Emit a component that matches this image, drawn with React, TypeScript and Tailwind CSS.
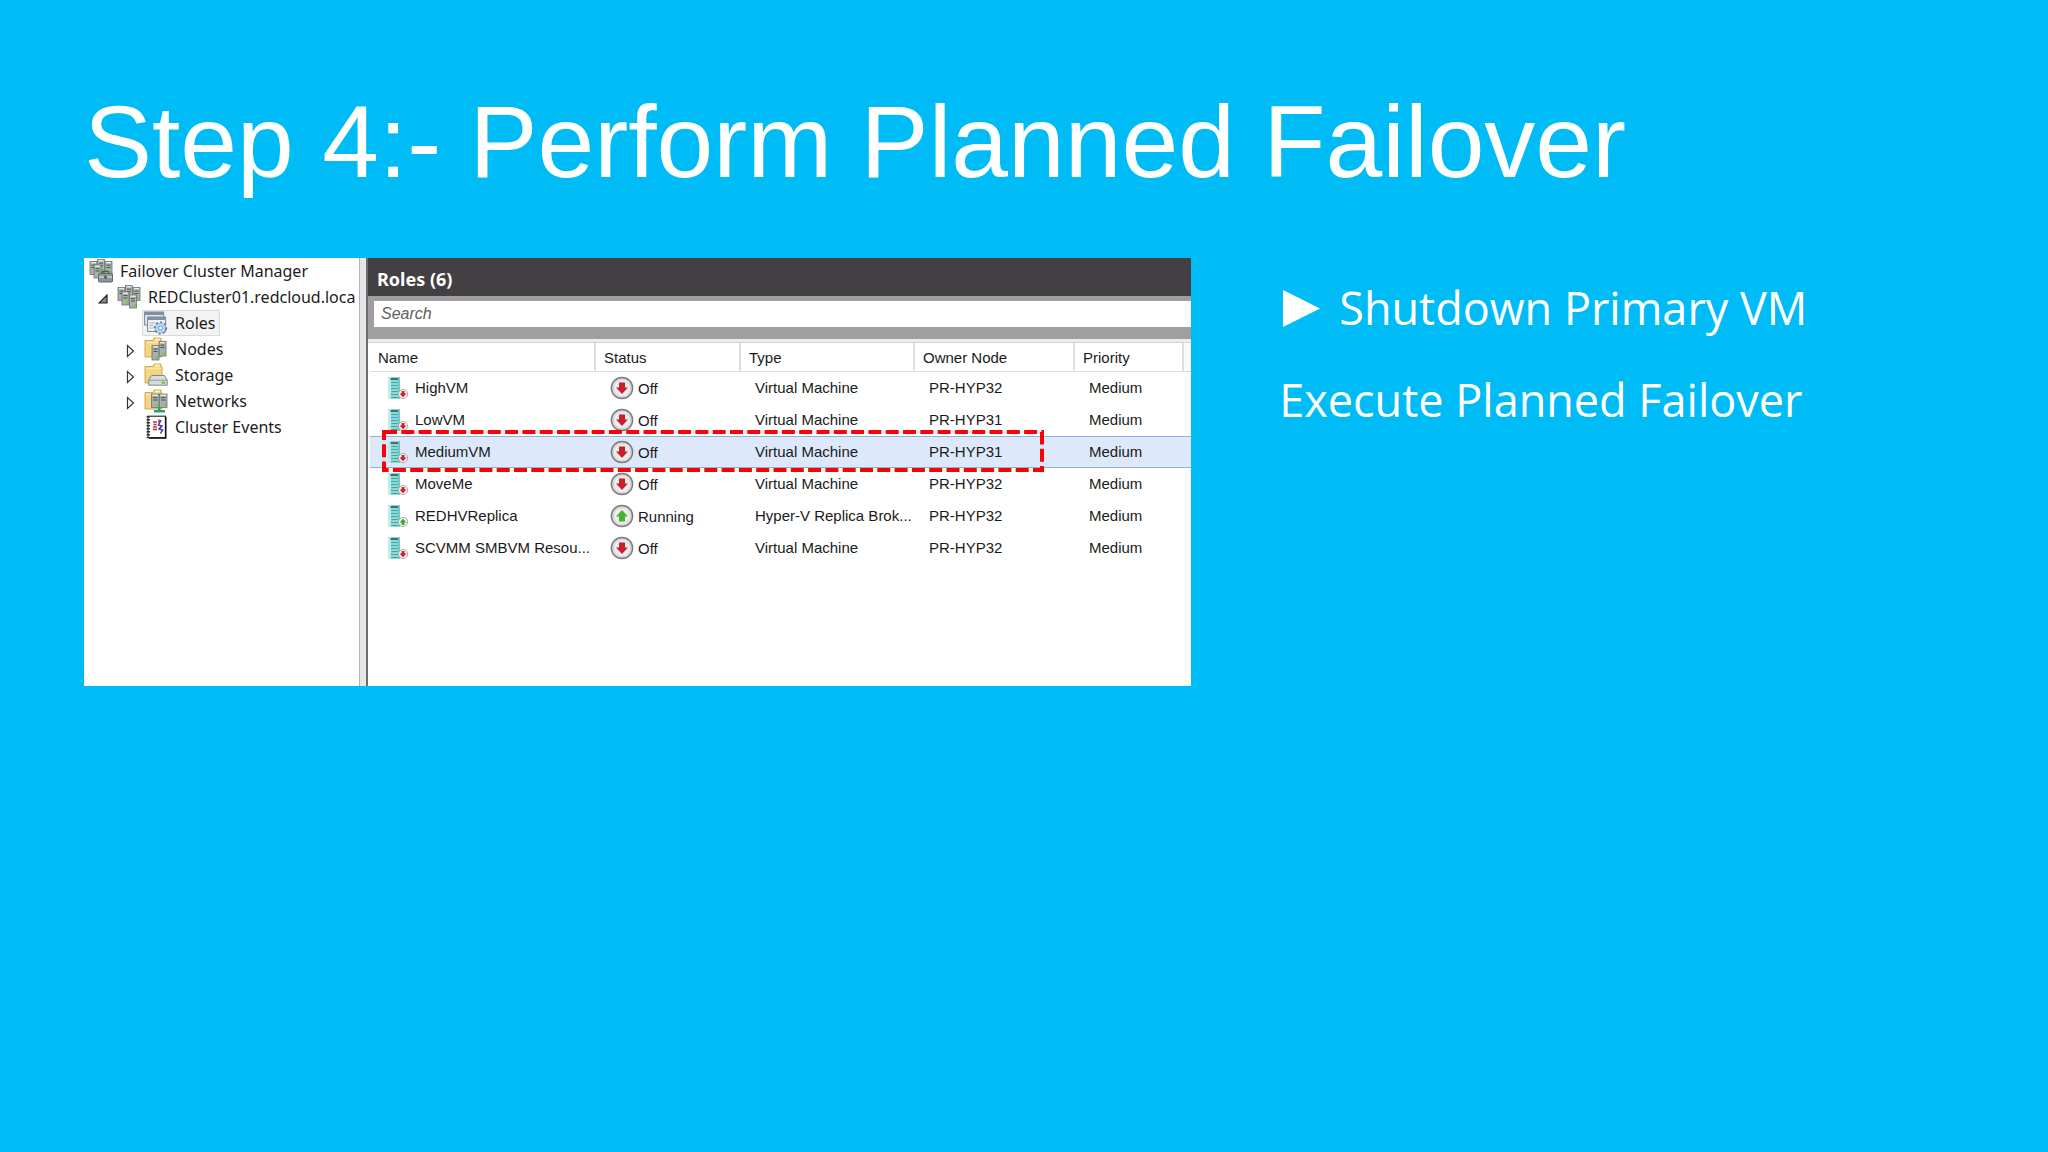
import clsx from "clsx";

type RoleState = "Off" | "Running";
type TreeIconName = "manager" | "cluster" | "roles" | "nodes" | "storage" | "networks" | "events";

interface Role {
  name: string;
  state: RoleState;
  type: string;
  owner: string;
  priority: string;
  selected?: boolean;
}

interface TreeNode {
  label: string;
  icon: TreeIconName;
  expandable?: boolean;
  selected?: boolean;
}

const ROLES: Role[] = [
  { name: "HighVM", state: "Off", type: "Virtual Machine", owner: "PR-HYP32", priority: "Medium" },
  { name: "LowVM", state: "Off", type: "Virtual Machine", owner: "PR-HYP31", priority: "Medium" },
  { name: "MediumVM", state: "Off", type: "Virtual Machine", owner: "PR-HYP31", priority: "Medium", selected: true },
  { name: "MoveMe", state: "Off", type: "Virtual Machine", owner: "PR-HYP32", priority: "Medium" },
  { name: "REDHVReplica", state: "Running", type: "Hyper-V Replica Brok...", owner: "PR-HYP32", priority: "Medium" },
  { name: "SCVMM SMBVM Resou...", state: "Off", type: "Virtual Machine", owner: "PR-HYP32", priority: "Medium" },
];

const CHILDREN: TreeNode[] = [
  { label: "Roles", icon: "roles", selected: true },
  { label: "Nodes", icon: "nodes", expandable: true },
  { label: "Storage", icon: "storage", expandable: true },
  { label: "Networks", icon: "networks", expandable: true },
  { label: "Cluster Events", icon: "events" },
];

const COLUMNS = ["Name", "Status", "Type", "Owner Node", "Priority"];

function Tower({ x, y, w = 7, h = 13 }: { x: number; y: number; w?: number; h?: number }) {
  return (
    <g>
      <rect x={x} y={y} width={w} height={h} fill="#a9b0ae" stroke="#6d7673" strokeWidth="0.8" />
      <path d={`M${x + 1} ${y + 1.2}h${w - 2}`} stroke="#eef2f1" strokeWidth="1.2" />
      <path d={`M${x + 1.5} ${y + 3.6}h${w - 3}M${x + 1.5} ${y + 6}h${w - 3}`} stroke="#4b5553" strokeWidth="1" />
      <rect x={x + w - 3} y={y + h - 3.6} width="2" height="2.2" fill="#5fd32a" />
    </g>
  );
}

function Folder() {
  return (
    <g>
      <path d="M1 3.5h8l1-2.5h7v3h1v16H1z" fill="#f5d67c" stroke="#c9a24a" strokeWidth="0.9" />
      <path d="M11 2.5h5" stroke="#fff3c4" strokeWidth="1.6" />
      <path d="M2 5.5h15" stroke="#fbe8ac" strokeWidth="1.4" />
    </g>
  );
}

function TreeIcon({ name }: { name: TreeIconName }) {
  return (
    <svg viewBox="0 0 24 24" className="size-6 shrink-0" aria-hidden="true">
      {(name === "manager" || name === "cluster") && (
        <>
          <Tower x={8.5} y={0.6} />
          <Tower x={1} y={2.5} />
          <Tower x={16} y={2.5} />
        </>
      )}
      {name === "cluster" && (
        <>
          <Tower x={5} y={7} />
          <Tower x={12.5} y={10} />
        </>
      )}
      {name === "manager" && (
        <>
          <Tower x={5} y={6} />
          <path d="M13.5 14.5v-2.2h6v2.2" fill="none" stroke="#4f565a" strokeWidth="1.3" />
          <rect x="9.5" y="14.5" width="14" height="8.5" rx="1" fill="#8d969b" stroke="#575f64" strokeWidth="0.9" />
          <path d="M10 18h13" stroke="#d5dadd" strokeWidth="1.3" />
          <rect x="15.2" y="16.8" width="2.6" height="2.8" fill="#4f565a" />
        </>
      )}
      {name === "roles" && (
        <>
          <rect x="0.6" y="1" width="19" height="13" fill="#dfe5ec" stroke="#7d8896" strokeWidth="1" />
          <rect x="0.6" y="1" width="19" height="3" fill="#8290a3" />
          <rect x="3.6" y="6" width="18" height="14.5" fill="#eef2f7" stroke="#7d8896" strokeWidth="1" />
          <rect x="3.6" y="6" width="18" height="3" fill="#8290a3" />
          <path d="M5.5 12h6M5.5 14.5h4M5.5 17h4" stroke="#aab4c1" strokeWidth="1.2" />
          <circle cx="16.500" cy="17" r="5.6" fill="#9fc0dd" stroke="#5b7c9c" strokeWidth="2" strokeDasharray="2.1 2.1" />
          <circle cx="16.500" cy="17" r="4.8" fill="#b9d6ee" />
          <circle cx="16.500" cy="17" r="2" fill="#f4f9fd" stroke="#5f87ad" strokeWidth="0.8" />
        </>
      )}
      {name === "nodes" && (
        <>
          <Folder />
          <Tower x={15} y={4.5} h={14.5} />
          <Tower x={8} y={8.5} h={14.5} />
        </>
      )}
      {name === "storage" && (
        <>
          <Folder />
          <path d="M7.500 12.500h13l2.700 4.500v5.200H4.800V17z" fill="#d9dcde" stroke="#777d81" strokeWidth="0.9" />
          <path d="M5 17.2h18" stroke="#8c9296" strokeWidth="0.9" />
          <rect x="17.5" y="18.6" width="3.6" height="2" fill="#4ccb22" />
        </>
      )}
      {name === "networks" && (
        <>
          <Folder />
          <Tower x={7.5} y={5} w={7.5} h={13.5} />
          <Tower x={15.5} y={5} w={7.5} h={13.5} />
          <path d="M15.3 18.5v3M10 22.3h11" stroke="#22a06e" strokeWidth="2.4" />
        </>
      )}
      {name === "events" && (
        <>
          <rect x="4" y="1.2" width="17.5" height="21.6" fill="#fdfdfd" stroke="#222" strokeWidth="1.1" />
          <path d="M21.7 2v21H5" fill="none" stroke="#111" strokeWidth="1.6" />
          <path d="M4.3 1v22" stroke="#333" strokeWidth="3.4" strokeDasharray="1.5 1.5" />
          <path d="M9 7h4M9.5 9.5h3M9 12h4M9 14.5h4M15 4.5v3" stroke="#c62a3a" strokeWidth="1.6" />
          <path d="M17 5l-2.5 5 3.5 1-3 3 3.5 1-2 3.5" fill="none" stroke="#4436a8" strokeWidth="1.5" />
        </>
      )}
    </svg>
  );
}

function ServerIcon({ state }: { state: RoleState }) {
  return (
    <svg viewBox="0 0 20 24" className="h-6 w-5 shrink-0" aria-hidden="true">
      <rect x="0.5" y="1" width="11" height="22" fill="#8ad9d7" />
      <rect x="0.5" y="1" width="2.5" height="22" fill="#bdebe9" />
      <path d="M2.5 3h7.5" stroke="#1f5558" strokeWidth="1.5" />
      <path d="M3 6.5h7M3 9.5h7M3 12.5h7M3 15.5h7M3 18.5h7M3 21.5h7" stroke="#4aa5a6" strokeWidth="1" />
      <path d="M11.2 1v22" stroke="#55aeb0" strokeWidth="1" />
      <circle cx="15" cy="18" r="4.6" fill="#f4f0f0" stroke="#a8a2a2" strokeWidth="0.9" />
      {state === "Off"
        ? <path d="M13.6 15h2.8v2.6h2L15 21.2l-3.4-3.6h2z" fill="#c8202b" />
        : <path d="M13.6 21h2.8v-2.6h2L15 14.8l-3.4 3.6h2z" fill="#36ad27" />}
    </svg>
  );
}

function StatusIcon({ state }: { state: RoleState }) {
  return (
    <svg viewBox="0 0 24 24" className="size-6 shrink-0" aria-hidden="true">
      <circle cx="12" cy="12" r="10.6" fill="#e2e0e0" stroke="#7c7a7a" strokeWidth="1.5" />
      <circle cx="12" cy="12" r="8.6" fill="#f0eeee" stroke="#d4d1d1" strokeWidth="1" />
      {state === "Off"
        ? <path d="M9 6.5h6v5h3L12 18l-6-6.5h3z" fill="#c8202b" />
        : <path d="M9 17.5h6v-5h3L12 6l-6 6.5h3z" fill="#41b82c" />}
    </svg>
  );
}

function TreeItem({ node }: { node: TreeNode }) {
  return (
    <li className="flex h-[26px] items-center pl-[42px]">
      <span className="flex w-4">
        {node.expandable && (
          <button type="button" aria-label={`Expand ${node.label}`}>
            <svg viewBox="0 0 10 14" className="mt-1 h-3.5 w-2.5">
              <path d="M1.5 1.5v11L7.5 7z" fill="#fff" stroke="#333" strokeWidth="1.2" />
            </svg>
          </button>
        )}
      </span>
      <button
        type="button"
        className={clsx(
          "flex h-[26px] items-center gap-[7px] border pr-1 pl-px",
          node.selected ? "border-[#dadada] bg-[#f3f3f3]" : "border-transparent",
        )}
      >
        <TreeIcon name={node.icon} />
        {node.label}
      </button>
    </li>
  );
}

function ClusterTree() {
  return (
    <nav
      aria-label="Cluster"
      className="w-[275px] shrink-0 overflow-hidden font-['Noto_Sans','Open_Sans',sans-serif] text-[16px] leading-6 whitespace-nowrap text-[#1c1c1c]"
    >
      <div className="flex h-[26px] items-center gap-[7px] pl-[5px]">
        <TreeIcon name="manager" />
        Failover Cluster Manager
      </div>
      <div className="flex h-[26px] items-center pl-[14px]">
        <button type="button" aria-label="Collapse cluster" className="w-[19px]">
          <svg viewBox="0 0 10 10" className="mt-1 size-2.5">
            <path d="M9 1v8H1z" fill="#8a8a8a" stroke="#222" strokeWidth="1.2" />
          </svg>
        </button>
        <TreeIcon name="cluster" />
        <span className="pl-[7px]">REDCluster01.redcloud.loca</span>
      </div>
      <ul>
        {CHILDREN.map((node) => <TreeItem key={node.label} node={node} />)}
      </ul>
    </nav>
  );
}

function RoleRow({ role }: { role: Role }) {
  return (
    <tr className={clsx("h-8", role.selected && "bg-[#dde8fb] shadow-[inset_0_1px_#8fb0dc,inset_0_-1px_#8fb0dc]")}>
      <td className="pl-[18px]">
        <div className="flex items-center gap-[7px]">
          <ServerIcon state={role.state} />
          {role.name}
        </div>
      </td>
      <td className="pl-3.5">
        <div className="flex items-center gap-1">
          <StatusIcon state={role.state} />
          <span className="pt-0.5">{role.state}</span>
        </div>
      </td>
      <td className="pl-3.5">{role.type}</td>
      <td className="pl-3.5">{role.owner}</td>
      <td className="pl-3.5">{role.priority}</td>
      <td />
    </tr>
  );
}

function RolesTable() {
  return (
    <div className="relative pl-0.5">
      <table className="w-full table-fixed border-separate border-spacing-0 text-[15px] leading-5 whitespace-nowrap text-[#1a1a1a]">
        <colgroup>
          <col className="w-[226px]" />
          <col className="w-[145px]" />
          <col className="w-[174px]" />
          <col className="w-[160px]" />
          <col className="w-[109px]" />
          <col />
        </colgroup>
        <thead>
          <tr className="h-[29px]">
            {COLUMNS.map((label) => (
              <th key={label} scope="col" className="border-r-2 border-b border-[#dedede] pt-0.5 pl-2 text-left font-normal">
                {label}
              </th>
            ))}
            <td className="border-b border-[#dedede]" />
          </tr>
        </thead>
        <tbody>
          {ROLES.map((role) => <RoleRow key={role.name} role={role} />)}
        </tbody>
      </table>
      {/* callout round the selected role */}
      <svg viewBox="0 0 662 42" className="pointer-events-none absolute top-[87px] left-3.5 h-[42px] w-[662px]" aria-hidden="true">
        <rect x="2" y="2" width="658" height="38" fill="none" stroke="#fb0007" strokeWidth="4" strokeDasharray="13 4.3" />
      </svg>
    </div>
  );
}

function RolesPane() {
  return (
    <section className="min-w-0 flex-1 font-['Liberation_Sans',Arial,sans-serif]">
      <h2 className="flex h-[38px] items-center bg-[#424042] pt-1 pl-[9px] font-['Noto_Sans','Open_Sans',sans-serif] text-[18px] font-bold text-white">
        Roles (6)
      </h2>
      <div className="flex h-[46px] flex-col border-b-3 border-[#ececec] bg-[#a09ea0] pt-[5px] pl-1.5">
        <input
          type="text"
          aria-label="Search roles"
          placeholder="Search"
          className="h-[26px] w-full bg-white px-[7px] text-[16px] italic outline-none placeholder:text-[#606060]"
        />
      </div>
      <div className="border-t border-[#d6d6d6]">
        <RolesTable />
      </div>
    </section>
  );
}

export default function App() {
  return (
    <main className="min-h-screen bg-[#00bcf6] pt-[82px] pr-[55px] pb-16 pl-[84px] text-white">
      <h1 className="font-['Liberation_Sans',Arial,sans-serif] text-[102px] leading-[120px]">
        Step 4:- Perform Planned Failover
      </h1>
      <div className="mt-14 flex items-start gap-[88px]">
        <div className="flex min-h-[428px] w-[58%] overflow-hidden bg-white">
          <ClusterTree />
          <div className="w-[9px] shrink-0 border-r-2 border-l border-r-[#6e6c6e] border-l-[#b5b5b5] bg-[#e6e6e8]" />
          <RolesPane />
        </div>
        <div className="flex flex-1 flex-col gap-8 pt-5 font-['Open_Sans','Noto_Sans',sans-serif] text-[45px] leading-[60px] whitespace-nowrap">
          <p className="flex items-center gap-[18px]">
            <svg viewBox="0 0 38 40" className="ml-1 h-10 w-[38px]" aria-hidden="true">
              <path d="M0 2v37l37-18.500z" fill="#fff" />
            </svg>
            Shutdown Primary VM
          </p>
          <p>Execute Planned Failover</p>
        </div>
      </div>
    </main>
  );
}
